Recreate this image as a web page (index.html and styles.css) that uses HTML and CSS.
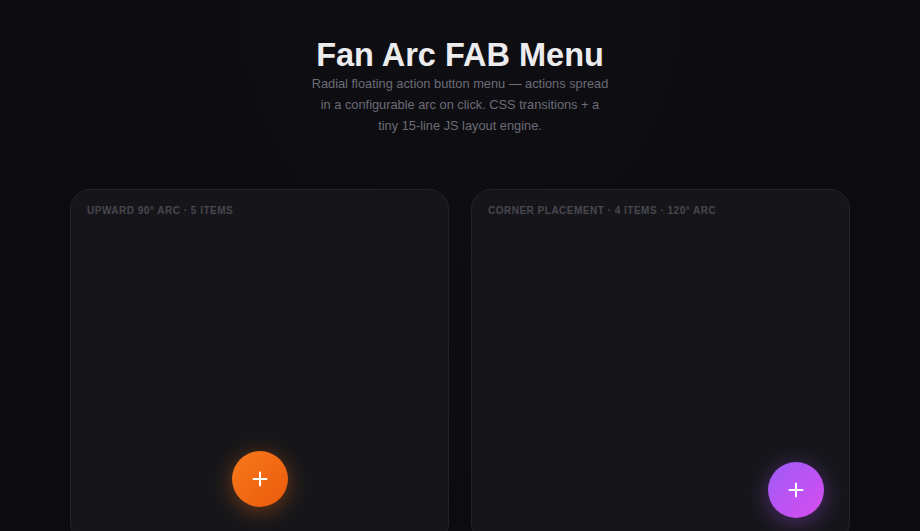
FILE: index.html
```html
<!DOCTYPE html>
<html lang="en">
<head>
    <meta charset="UTF-8">
    <meta name="viewport" content="width=device-width, initial-scale=1.0">
    <title>Fan Arc FAB Menu</title>
    <link rel="stylesheet" href="styles.css">
</head>
<body>

    <header class="intro">
        <h1>Fan Arc FAB Menu</h1>
        <p>Radial floating action button menu — actions spread in a configurable arc on click. CSS transitions + a tiny 15-line JS layout engine.</p>
    </header>

    <main class="demos">
        <section class="demo">
            <div class="demo-label">Upward 90° arc · 5 items</div>
            <button class="fab fab-orange fab-center" aria-label="Open menu">
                <svg viewBox="0 0 16 16" width="16" height="16"><path d="M8 1.5v13M1.5 8h13" stroke="#fff" stroke-width="2" stroke-linecap="round"/></svg>
            </button>
        </section>

        <section class="demo">
            <div class="demo-label">Corner placement · 4 items · 120° arc</div>
            <button class="fab fab-purple fab-corner" aria-label="Open menu">
                <svg viewBox="0 0 16 16" width="16" height="16"><path d="M8 1.5v13M1.5 8h13" stroke="#fff" stroke-width="2" stroke-linecap="round"/></svg>
            </button>
        </section>
    </main>

</body>
</html>
```

FILE: styles.css
```css
body, html {
    margin: 0;
    padding: 0;
    background-color: #0c0c10;
    font-family: "Liberation Sans", Arial, sans-serif;
    color: #ececf0;
}

body {
    min-height: 100vh;
    background: radial-gradient(ellipse at 50% 0%, #0f0f13 0%, #0c0c10 70%);
}

.intro {
    padding-top: 36px;
    text-align: center;
}

.intro h1 {
    margin: 0;
    font-size: 32.5px;
    line-height: 38.4px;
    font-weight: bold;
    color: #ececef;
}

.intro p {
    margin: 0 auto;
    max-width: 298px;
    font-size: 12.8px;
    line-height: 20.8px;
    color: #6c6c76;
}

.demos {
    display: grid;
    grid-template-columns: 1fr 1fr;
    gap: 22px;
    max-width: 780px;
    margin: 52px auto 0;
}

.demo {
    position: relative;
    height: 354px;
    box-sizing: border-box;
    padding: 15px 16px;
    background-color: #16161a;
    border: 1px solid #232328;
    border-radius: 20px;
}

.demo-label {
    font-size: 10px;
    line-height: 12px;
    font-weight: bold;
    letter-spacing: 0.5px;
    text-transform: uppercase;
    color: #47474f;
}

.fab {
    position: absolute;
    width: 56px;
    height: 56px;
    border: none;
    border-radius: 50%;
    padding: 0;
    display: flex;
    align-items: center;
    justify-content: center;
    cursor: pointer;
}

.fab-center {
    left: calc(50% - 28px);
    bottom: 35px;
}

.fab-corner {
    right: 25px;
    bottom: 24px;
}

.fab-orange {
    background: linear-gradient(135deg, #f97a1c 0%, #ea5a0c 100%);
    box-shadow: 0 4px 22px rgba(249, 115, 22, 0.4);
}

.fab-purple {
    background: linear-gradient(135deg, #9d5cf7 0%, #d94bef 100%);
    box-shadow: 0 4px 22px rgba(168, 85, 247, 0.4);
}
```
